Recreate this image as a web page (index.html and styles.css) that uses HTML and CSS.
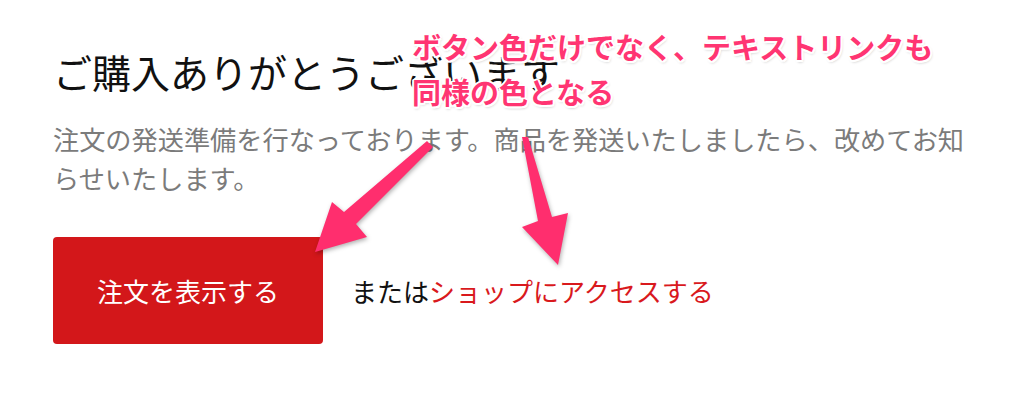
FILE: index.html
```html
<!DOCTYPE html>
<html lang="ja">
<head>
    <meta charset="UTF-8">
    <meta name="viewport" content="width=device-width, initial-scale=1.0">
    <title>ご購入ありがとうございます</title>
    <link rel="stylesheet" href="styles.css">
</head>
<body>
    <main class="thanks">
        <h1 class="thanks-title">ご購入ありがとうございます</h1>
        <p class="thanks-text">注文の発送準備を行なっております。商品を発送いたしましたら、改めてお知らせいたします。</p>

        <div class="thanks-actions">
            <a class="btn-order" href="#">注文を表示する</a>
            <span class="or-text">または<a class="shop-link" href="#">ショップにアクセスする</a></span>
        </div>
    </main>

    <!-- 注釈 -->
    <div class="note">ボタン色だけでなく、テキストリンクも<br>同様の色となる</div>

    <svg class="arrows" width="1024" height="417" viewBox="0 0 1024 417">
        <!-- ボタンへ -->
        <polygon points="427,141 344,212 332,202 315,252 367,237 356,224 433,147" />
        <!-- テキストリンクへ -->
        <polygon points="522,137 538,221 522,227 558,265 568,213 552,217 528,137" />
    </svg>
</body>
</html>
```

FILE: styles.css
```css
body {
    margin: 0;
    background-color: #fff;
    font-family: "Noto Sans CJK JP", "Noto Sans", sans-serif;
    position: relative;
    height: 417px;
    overflow: hidden;
}
.thanks {
    width: 930px;
    padding: 48px 0 0 53px;
}
.thanks-title {
    margin: 0;
    font-size: 39px;
    line-height: 47px;
    font-weight: 400;
    color: #111;
}
.thanks-text {
    margin: 25px 0 0;
    font-size: 26.2px;
    line-height: 39px;
    color: #7b7b7b;
}
.thanks-actions {
    display: flex;
    align-items: center;
    margin-top: 39px;
}
.btn-order {
    display: flex;
    align-items: center;
    justify-content: center;
    width: 270px;
    height: 107px;
    background-color: #d3171a;
    color: #fff;
    font-size: 26px;
    text-decoration: none;
    border-radius: 4px;
}
.or-text {
    margin-left: 28px;
    font-size: 26px;
    color: #111;
}
.shop-link {
    color: #d9191d;
    text-decoration: none;
}
.note {
    position: absolute;
    left: 412px;
    top: 24px;
    font-size: 29px;
    line-height: 45px;
    font-weight: 700;
    color: #ff3572;
    white-space: nowrap;
    text-shadow:
        2px 0 0 #fff, -2px 0 0 #fff, 0 2px 0 #fff, 0 -2px 0 #fff,
        1.5px 1.5px 0 #fff, -1.5px 1.5px 0 #fff, 1.5px -1.5px 0 #fff, -1.5px -1.5px 0 #fff,
        1px 2px 3px rgba(0, 0, 0, 0.3);
}
.arrows {
    position: absolute;
    left: 0;
    top: 0;
    pointer-events: none;
    fill: #ff2e6e;
    filter: drop-shadow(1px 2px 2px rgba(0, 0, 0, 0.3));
}
```
